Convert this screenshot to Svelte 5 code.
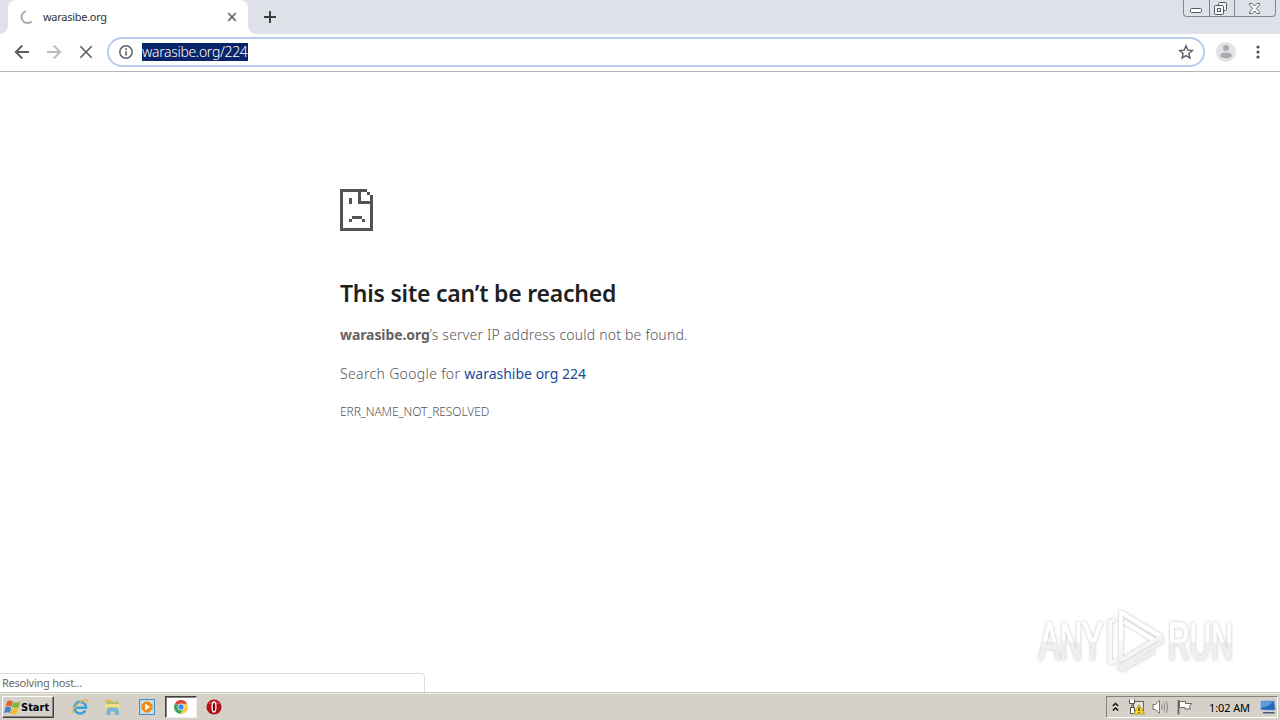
<script lang="ts">
  let tabTitle = 'warasibe.org';
  let address = 'warasibe.org/224';
  let host = 'warasibe.org';
  let suggestion = 'warashibe org 224';
  let clock = '1:02 AM';
</script>

<div class="screen">
  <div class="tabstrip">
    <div class="tab">
      <svg class="spinner" width="16" height="16" viewBox="0 0 16 16">
        <path d="M7 2.2A6 6 0 1 0 12.6 12.4" fill="none" stroke="#aaacae" stroke-width="2" />
      </svg>
      <span class="tab-title">{tabTitle}</span>
      <svg width="10" height="10" viewBox="0 0 10 10">
        <path d="M1.2 1.2l7.6 7.6M8.8 1.2L1.2 8.8" stroke="#6c7074" stroke-width="1.7" />
      </svg>
    </div>
    <svg class="new-tab" width="14" height="14" viewBox="0 0 14 14">
      <path d="M7 1v12M1 7h12" stroke="#3c4043" stroke-width="2" />
    </svg>
    <div class="window-buttons">
      <span class="wb min">
        <svg width="13" height="5" viewBox="0 0 13 5"><rect x=".5" y=".5" width="11" height="4" rx="1" fill="#fff" stroke="#555a66" /></svg>
      </span>
      <span class="wb max">
        <svg width="13" height="13" viewBox="0 0 13 13" fill="#f6f7f9" stroke="#555a66">
          <rect x="4.5" y=".5" width="8" height="8" rx="1" />
          <rect x=".5" y="3.5" width="9" height="9" rx="1" />
          <rect x="3.5" y="6.5" width="3" height="3" />
        </svg>
      </span>
      <span class="wb close">
        <svg width="13" height="11" viewBox="0 0 13 11">
          <path d="M1.5.5h2.700L6.500 3 8.800.5h2.700v1.400L8.400 5.500l3.100 3.600v1.400H8.800L6.500 8l-2.300 2.500H1.500V9.100l3.100-3.600-3.100-3.600z" fill="#f6f7f9" stroke="#555a66" stroke-width=".9" />
        </svg>
      </span>
    </div>
  </div>

  <div class="toolbar">
    <svg class="nav" width="16" height="16" viewBox="0 0 16 16">
      <path d="M15 8H2M8.300 1.500L1.800 8l6.500 6.500" fill="none" stroke="#5a5d61" stroke-width="1.900" />
    </svg>
    <svg class="nav" width="16" height="16" viewBox="0 0 16 16">
      <path d="M1 8h13M7.700 1.500L14.200 8l-6.500 6.500" fill="none" stroke="#b9bbbe" stroke-width="1.900" />
    </svg>
    <svg class="nav" width="16" height="16" viewBox="0 0 16 16">
      <path d="M2.300 2.300l11.400 11.400M13.700 2.300L2.300 13.700" stroke="#5a5d61" stroke-width="1.600" />
    </svg>
    <div class="omnibox">
      <svg width="16" height="16" viewBox="0 0 16 16">
        <circle cx="8" cy="8" r="6.200" fill="none" stroke="#5f6368" stroke-width="1.500" />
        <path d="M8 7.200v4.300M8 4.300v1.600" stroke="#5f6368" stroke-width="1.600" />
      </svg>
      <span class="address"><span class="selected">{address}</span></span>
      <svg width="16" height="16" viewBox="0 0 16 16">
        <path d="M8 1.900l1.800 4.200 4.600.4-3.500 3 1 4.500L8 11.600 4.100 14l1-4.500-3.500-3 4.600-.4z" fill="none" stroke="#5a5d61" stroke-width="1.400" />
      </svg>
    </div>
    <svg class="avatar" width="20" height="20" viewBox="0 0 20 20">
      <circle cx="10" cy="10" r="10" fill="#e1e2e4" />
      <circle cx="10" cy="6" r="3" fill="#a8aaad" />
      <path d="M4.200 13.600c0-2.200 3.600-3 5.800-3s5.800.8 5.800 3c0 1.600-3 2.700-5.800 2.700s-5.800-1.100-5.800-2.700z" fill="#a8aaad" />
    </svg>
    <svg class="menu" width="4" height="14" viewBox="0 0 4 14" fill="#505357">
      <circle cx="2" cy="2" r="1.600" /><circle cx="2" cy="7" r="1.600" /><circle cx="2" cy="12" r="1.600" />
    </svg>
  </div>

  <main class="page">
    <div class="error">
      <svg class="sad" width="33" height="42" viewBox="0 0 33 42" fill="#535353" shape-rendering="crispEdges">
        <path d="M0 0h27v3H3v36h27V15H18V3h3v9h9V6h3v36H0zM27 3h3v3h-3z" />
        <path d="M9 9h3v6H9zM12 27h10v3H12zM9 30h3v3H9zM22 30h3v3h-3z" />
      </svg>
      <h1>This site can’t be reached</h1>
      <p class="reason"><strong>{host}</strong>’s server IP address could not be found.</p>
      <p class="search">Search Google for <a href="#search">{suggestion}</a></p>
      <div class="code">ERR_NAME_NOT_RESOLVED</div>
    </div>

    <svg class="watermark" width="220" height="80" viewBox="0 0 220 80">
      <defs>
        <linearGradient id="wm" x1="0" y1="0" x2="0" y2="1">
          <stop offset="0.5" stop-color="#fff" />
          <stop offset="0.53" stop-color="#efefef" />
        </linearGradient>
        <filter id="wm-shadow" x="-10%" y="-10%" width="120%" height="120%">
          <feDropShadow dx="0" dy="0" stdDeviation="1.8" flood-color="#999" flood-opacity=".65" />
        </filter>
      </defs>
      <g filter="url(#wm-shadow)">
        <g fill="url(#wm)" stroke="url(#wm)" stroke-width="1.500" font-family="'Liberation Sans', sans-serif" font-size="52">
          <text transform="translate(14 60) scale(.6 1)">ANY</text>
          <text transform="translate(143 60) scale(.575 1)">RUN</text>
        </g>
        <g fill="none" stroke-linejoin="round" transform="translate(-1 1.500)">
          <path d="M91 19l-5 2v41l7-2" stroke="#f8f8f8" stroke-width="4" />
          <path d="M96 66l42-25-4-5M94 65l4 4 32-18" stroke="#efefef" stroke-width="4" />
          <path d="M97 60V12l40 24-40 24" stroke="#f5f5f5" stroke-width="4" />
          <path d="M97 40V12l38 23M100 21l29 18" stroke="#fff" stroke-width="4" />
        </g>
      </g>
    </svg>

    <div class="status">Resolving host...</div>
  </main>

  <footer class="taskbar">
    <div class="start">
      <svg width="17" height="16" viewBox="0 0 17 16">
        <path d="M3 2.500c2-1.500 3.800-1.200 5.800 0L7.500 7.800c-1.700-1-3.500-1.100-5.800 0z" fill="#e3632b" />
        <path d="M9.300 3c2 1 4 1 7-.7L14.700 7.900C12.500 9 10 9 7.900 8z" fill="#7db83c" />
        <path d="M1.400 8.600c2-1.200 3.800-1 5.800 0L5.700 14c-1.700-1-3.500-1-5.700 0z" fill="#3f83c9" />
        <path d="M7.700 8.900c2 1 4 1 6.800-.3L13 14.200c-2 1.200-4.500 1.300-6.800.1z" fill="#f4bd2c" />
      </svg>
      <span>Start</span>
    </div>

    <div class="quick">
      <svg width="18" height="18" viewBox="0 0 18 18">
        <path d="M14.300 12.500A5.800 5.800 0 1 1 15 9.800H5" fill="none" stroke="#38a3db" stroke-width="2.600" />
        <path d="M2 15.500C-1 13 8 3 14.500 1.700c3-.4 2.700 2 1.700 3.600" fill="none" stroke="#e4b93e" stroke-width="1.400" />
      </svg>
    </div>
    <div class="quick">
      <svg width="18" height="18" viewBox="0 0 18 18">
        <path d="M2 2h5l1 1.500h7V13H2z" fill="#dcb94e" />
        <path d="M3 4.500h11v2H3z" fill="#8fc98c" />
        <path d="M1.500 6h14v7h-14z" fill="#f5df86" />
        <path d="M3 16.500v-4q0-2.500 2-2.500h7.500q2 0 2 2.500v4h-3V13H6v3.500z" fill="#79bde2" stroke="#5198c2" stroke-width=".6" />
      </svg>
    </div>
    <div class="quick">
      <svg width="18" height="18" viewBox="0 0 18 18">
        <rect x="1.500" y="1.500" width="15" height="15" fill="#b9dbef" stroke="#4d90c0" />
        <path d="M4 3.500h10v11H4z" fill="#e3f1f9" />
        <circle cx="9" cy="9" r="5.700" fill="#f28a1e" />
        <path d="M7.200 5.700l5 3.300-5 3.300z" fill="#fff" />
      </svg>
    </div>
    <div class="quick active">
      <svg width="14" height="14" viewBox="0 0 14 14">
        <path d="M7 7L.9 3.500A7 7 0 0 1 13.100 3.500z" fill="#df4436" />
        <path d="M7 7L1 3.400A7 7 0 0 0 6.500 14L10 8.500z" fill="#3da557" />
        <path d="M7 3.800h6.200A7 7 0 0 1 6.500 14l3.500-5.500z" fill="#fbcd3e" />
        <circle cx="7" cy="7" r="3.200" fill="#4384f3" stroke="#fff" stroke-width=".8" />
      </svg>
    </div>
    <div class="quick">
      <svg width="16" height="16" viewBox="0 0 16 16">
        <circle cx="8" cy="8" r="7.600" fill="#b51219" />
        <path d="M2 5a7 5 0 0 1 12 0z" fill="#d04a4c" />
        <ellipse cx="8" cy="8" rx="1.900" ry="5" fill="#7c090d" stroke="#fff" stroke-width="1.300" />
      </svg>
    </div>

    <div class="tray">
      <svg class="chevrons" width="7" height="10" viewBox="0 0 7 10">
        <path d="M.8 4l2.700-2.500L6.200 4M.8 8.500L3.500 6l2.700 2.500" fill="none" stroke="#111" stroke-width="1.500" />
      </svg>
      <svg width="17" height="16" viewBox="0 0 17 16">
        <rect x="5.500" y="2.500" width="10" height="9" fill="#e4e4e4" stroke="#666" />
        <path d="M1.500.5v4h5v-4M4 4.500v4M2.500 8.500h4v6h-4z" fill="#fff" stroke="#555" />
        <path d="M11 5.500l5.500 9.500h-11z" fill="#fbd920" stroke="#a78a11" stroke-width=".7" />
        <path d="M11 8.500v3.500M11 13v1" stroke="#222" stroke-width="1.200" />
      </svg>
      <svg width="17" height="16" viewBox="0 0 17 16">
        <path d="M1 5.500h2.500l4-4v13l-4-4H1z" fill="#fff" stroke="#777" />
        <path d="M9.500 5.500q1.500 2.500 0 5M11.700 3.700q2.500 4.300 0 8.600M13.800 2q3.700 6 0 12" fill="none" stroke="#888" />
      </svg>
      <svg width="17" height="16" viewBox="0 0 17 16">
        <path d="M2.500 1v14.500" stroke="#666" stroke-width="1.800" />
        <path d="M3.500 2.500h6v2h6l-2 3 1 2.500H9V8.500H3.500z" fill="#fff" stroke="#666" />
      </svg>
      <span class="clock">{clock}</span>
      <svg class="desktop" width="16" height="14" viewBox="0 0 16 14">
        <path d="M.5 1l14-.5 1 10-15-.5z" fill="#2a68b5" stroke="#b9d3ea" stroke-width=".7" />
        <path d="M1 1.500L14 1 8 6 1 8z" fill="#5e9bdb" />
        <path d="M3 12h11l1 1.500H3z" fill="#465a70" />
      </svg>
    </div>
  </footer>
</div>

<style>
  :global(body) {
    background: #fff;
  }

  .screen {
    display: flex;
    flex-direction: column;
    width: 1280px;
    height: 720px;
    overflow: hidden;
    font-family: 'Noto Sans', 'Open Sans', sans-serif;
    color: #333;
  }

  svg {
    display: block;
    flex: none;
  }

  .tabstrip {
    display: flex;
    align-items: center;
    height: 34px;
    background: #dee1e8;
  }

  .tab {
    position: relative;
    display: flex;
    align-items: center;
    box-sizing: border-box;
    width: 240px;
    height: 34px;
    margin-left: 8px;
    padding: 0 11px;
    background: #fff;
    border-radius: 8px 8px 0 0;
  }

  .tab::before,
  .tab::after {
    content: '';
    position: absolute;
    bottom: 0;
    width: 8px;
    height: 8px;
  }

  .tab::before {
    left: -8px;
    background: radial-gradient(circle at 0 0, transparent 7.5px, #fff 8px);
  }

  .tab::after {
    right: -8px;
    background: radial-gradient(circle at 100% 0, transparent 7.5px, #fff 8px);
  }

  .tab-title {
    flex: 1;
    padding-left: 8px;
    font-size: 11px;
    line-height: 16px;
    letter-spacing: -0.28px;
    white-space: nowrap;
  }

  .new-tab {
    margin-left: 15px;
  }

  .window-buttons {
    display: flex;
    align-self: flex-start;
    box-sizing: border-box;
    height: 17px;
    margin-left: auto;
    margin-right: 4px;
    border: 1px solid #83868e;
    border-top: 0;
    border-radius: 0 0 4px 4px;
  }

  .wb {
    display: flex;
    justify-content: center;
    align-items: center;
    box-sizing: border-box;
    width: 25px;
  }

  .wb.min {
    padding-top: 5px;
  }

  .wb.max,
  .wb.close {
    border-left: 1px solid #83868e;
  }

  .wb.max {
    padding-right: 3px;
  }

  .wb.close {
    width: 41px;
    padding-right: 2px;
  }

  .toolbar {
    display: flex;
    align-items: center;
    box-sizing: border-box;
    height: 38px;
    padding: 0 20px 1px 14px;
    background: #fff;
    border-bottom: 1px solid #b2b4b6;
  }

  .nav {
    margin-right: 16px;
  }

  .omnibox {
    display: flex;
    align-items: center;
    box-sizing: border-box;
    width: 1098px;
    height: 30px;
    margin-left: -3px;
    padding: 0 9px;
    border: 2px solid #b7cdee;
    border-radius: 15px;
  }

  .address {
    flex: 1;
    padding-left: 8px;
    font-size: 14px;
    font-weight: 300;
    line-height: 18px;
    white-space: nowrap;
  }

  .selected {
    display: inline-block;
    width: 106px;
    height: 18px;
    color: #fff;
    letter-spacing: -0.33px;
    background: #0a246a;
  }

  .avatar {
    margin-left: 11px;
  }

  .menu {
    margin-left: auto;
  }

  .page {
    position: relative;
    flex: 1;
    background: #fff;
  }

  .error {
    width: 600px;
    margin: 0 auto;
    padding-top: 117px;
    color: #555;
    font-size: 14px;
  }

  h1 {
    margin: 46px 0 0;
    color: #1f1f1f;
    font-size: 23px;
    font-weight: 600;
    line-height: 32px;
    letter-spacing: -0.22px;
  }

  p {
    margin: 0;
    line-height: 20px;
    font-weight: 300;
    letter-spacing: 0.2px;
  }

  .reason {
    margin-top: 16px;
  }

  .reason strong {
    color: #646464;
    font-weight: 700;
    letter-spacing: -0.08px;
  }

  .search {
    margin-top: 19px;
    letter-spacing: 0.34px;
  }

  a {
    color: #174a9a;
    font-weight: 400;
    letter-spacing: 0;
    text-decoration: none;
  }

  .code {
    margin-top: 20px;
    font-size: 12px;
    font-weight: 300;
    line-height: 16px;
    letter-spacing: -0.08px;
  }

  .watermark {
    position: absolute;
    right: 35px;
    bottom: 13px;
  }

  .status {
    position: absolute;
    left: 0;
    bottom: 0;
    box-sizing: border-box;
    width: 425px;
    height: 19px;
    padding-left: 2px;
    border: 1px solid #dcdddd;
    border-left: 0;
    border-bottom: 0;
    border-radius: 0 4px 0 0;
    color: #68696b;
    font-size: 11px;
    line-height: 18px;
    letter-spacing: -0.25px;
  }

  .taskbar {
    display: flex;
    align-items: center;
    box-sizing: border-box;
    height: 28px;
    padding: 1px 2px 0;
    background: #d5d0c8;
    border-top: 1px solid #c8c6bf;
    box-shadow: inset 0 1px #efeee9;
  }

  .start {
    display: flex;
    align-items: center;
    box-sizing: border-box;
    width: 52px;
    height: 22px;
    margin-right: 11px;
    padding-left: 1px;
    border: 1px solid;
    border-color: #fff #404040 #404040 #fff;
    box-shadow: inset -1px -1px #85827c;
    color: #000;
    font-family: 'DejaVu Sans Condensed', 'DejaVu Sans', sans-serif;
    font-size: 11px;
    font-weight: 700;
  }

  .quick {
    display: flex;
    justify-content: center;
    align-items: center;
    box-sizing: border-box;
    width: 29px;
    height: 22px;
    margin-right: 4.5px;
  }

  .quick.active {
    width: 32px;
    margin-left: -1px;
    margin-right: 3px;
    background: #fff;
    border: 1px solid;
    border-color: #404040 #f4f2ed #f4f2ed #404040;
    box-shadow: inset 1px 1px #85827c;
  }

  .tray {
    display: flex;
    align-items: center;
    gap: 7px;
    box-sizing: border-box;
    width: 172px;
    height: 22px;
    margin-left: auto;
    padding: 0 1px 0 5px;
    border: 1px solid;
    border-color: #85827c #fff #fff #85827c;
  }

  .chevrons {
    margin-right: 2px;
  }

  .clock {
    margin-left: auto;
    color: #000;
    font-size: 11px;
    letter-spacing: -0.1px;
    white-space: nowrap;
  }

  .desktop {
    margin-left: 3px;
  }
</style>
